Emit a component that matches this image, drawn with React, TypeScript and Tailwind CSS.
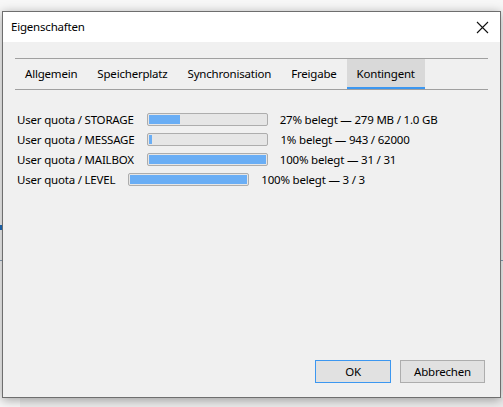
import React from "react";

const quotas = [
  { label: "User quota / STORAGE", pct: 27, text: "27% belegt — 279 MB / 1.0 GB" },
  { label: "User quota / MESSAGE", pct: 1, text: "1% belegt — 943 / 62000" },
  { label: "User quota / MAILBOX", pct: 100, text: "100% belegt — 31 / 31" },
  { label: "User quota / LEVEL", pct: 100, text: "100% belegt — 3 / 3" },
];

const tabs = ["Allgemein", "Speicherplatz", "Synchronisation", "Freigabe", "Kontingent"];

function QuotaBar({ pct }: { pct: number }) {
  return (
    <div className="w-[121px] h-[13px] border border-[#adadad] bg-[#e6e6e6] rounded-[2px] p-px">
      <div className="h-full bg-[#6aaef5]" style={{ width: `${Math.max(pct, 2)}%` }} />
    </div>
  );
}

export default function App() {
  return (
    <div
      className="relative w-[503px] h-[407px] overflow-hidden bg-[#f7f7f7] text-[11.5px] tracking-[-0.2px] text-black"
      style={{ fontFamily: '"Segoe UI", "Noto Sans", sans-serif' }}
    >
      {/* bits of the window underneath */}
      <div className="absolute left-0 top-[225px] w-[2px] h-[5px] bg-[#1f6fc0]" />
      <div className="absolute left-0 top-[260px] w-[3px] h-px bg-[#8aa0b8]" />
      <div className="absolute right-0 top-[260px] w-[3px] h-px bg-[#8aa0b8]" />
      <div className="absolute left-[20px] top-[397px] w-[483px] h-[10px] bg-[#ececec]" />

      <div className="relative ml-[2px] mt-[11px] w-[499px] h-[387px] border border-[#6e6e6e] bg-[#f0f0f0] shadow-[0_2px_10px_rgba(0,0,0,0.35)] flex flex-col">
        <div className="h-[30px] bg-white flex items-center justify-between pl-[8px] pr-[10px]">
          <span>Eigenschaften</span>
          <svg width="13" height="13" viewBox="0 0 13 13" className="mr-[1px]">
            <path d="M1 1 L12 12 M12 1 L1 12" stroke="#111" strokeWidth="1.1" />
          </svg>
        </div>

        <div className="mt-[16px] mx-[12px] border-y border-[#a0a0a0] flex h-[32px]">
          {tabs.map((t) => (
            <div
              key={t}
              className={
                t === "Kontingent"
                  ? "px-[10px] flex items-center bg-[#d9d9d9] border-b-[2px] border-[#3c97f0] pt-[2px]"
                  : "px-[10px] flex items-center"
              }
            >
              {t}
            </div>
          ))}
        </div>

        <div className="mt-[23px] pl-[14px] flex flex-col gap-[7px]">
          {quotas.map((q) => (
            <div key={q.label} className="flex items-center h-[13px]">
              <span className="whitespace-nowrap">{q.label}</span>
              <div className="ml-[13px]">
                <QuotaBar pct={q.pct} />
              </div>
              <span className="ml-[12px] whitespace-nowrap">{q.text}</span>
            </div>
          ))}
        </div>

        <div className="mt-auto mb-[14px] mr-[15px] flex justify-end gap-[9px]">
          <button className="w-[76px] h-[23px] bg-[#e1e1e1] border border-[#3c97f0]">OK</button>
          <button className="w-[85px] h-[23px] bg-[#e1e1e1] border border-[#adadad]">Abbrechen</button>
        </div>
      </div>
    </div>
  );
}
